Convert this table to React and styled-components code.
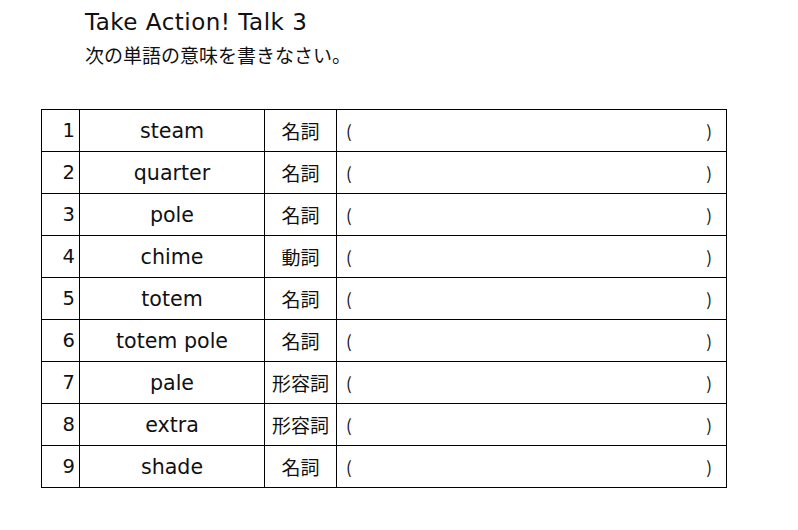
import React from "react";
import styled, { createGlobalStyle } from "styled-components";

const Global = createGlobalStyle`
  html, body { margin: 0; padding: 0; background: #fff; }
  body { font-family: "DejaVu Sans", "Noto Sans CJK JP", sans-serif; color: #111; }
`;

const Page = styled.div`
  width: 798px;
  height: 530px;
  padding: 3px 0 0 41px;
  box-sizing: border-box;
`;

const Header = styled.div`
  padding-left: 44px;
  display: flex;
  flex-direction: column;
`;

const Title = styled.h1`
  margin: 0;
  font-weight: 400;
  font-size: 23px;
  letter-spacing: 0.5px;
  line-height: 38px;
  font-family: "DejaVu Sans", "Noto Sans CJK JP", sans-serif;
`;

const Sub = styled.p`
  margin: 0;
  font-size: 19px;
  line-height: 28px;
  font-family: "Noto Sans CJK JP", sans-serif;
`;

const Table = styled.table`
  margin-top: 40px;
  border-collapse: collapse;
  table-layout: fixed;
  width: 685px;
`;

const Row = styled.tr`
  height: 42px;
`;

const NumCell = styled.td`
  border: 1px solid #000;
  padding: 0 4px 0 0;
  text-align: right;
  font-family: "DejaVu Sans", sans-serif;
  font-size: 19.5px;
  vertical-align: middle;
`;

const WordCell = styled.td`
  border: 1px solid #000;
  padding: 0;
  text-align: center;
  font-family: "DejaVu Sans", sans-serif;
  font-size: 20.6px;
  vertical-align: middle;
`;

const PosCell = styled.td`
  border: 1px solid #000;
  padding: 0;
  text-align: center;
  font-family: "Noto Sans CJK JP", sans-serif;
  font-size: 19px;
  vertical-align: middle;
`;

const AnswerCell = styled.td`
  border: 1px solid #000;
  padding: 0;
  vertical-align: middle;
`;

const Blank = styled.div`
  display: flex;
  justify-content: space-between;
  padding: 0 14px 0 9px;
  font-family: "Noto Sans CJK JP", sans-serif;
  font-size: 17px;
`;

const rows = [
  ["steam", "名詞"],
  ["quarter", "名詞"],
  ["pole", "名詞"],
  ["chime", "動詞"],
  ["totem", "名詞"],
  ["totem pole", "名詞"],
  ["pale", "形容詞"],
  ["extra", "形容詞"],
  ["shade", "名詞"],
];

export default function App() {
  return (
    <Page>
      <Global />
      <Header>
        <Title>Take Action! Talk 3</Title>
        <Sub>次の単語の意味を書きなさい。</Sub>
      </Header>
      <Table>
        <colgroup>
          <col style={{ width: 38 }} />
          <col style={{ width: 185 }} />
          <col style={{ width: 72 }} />
          <col style={{ width: 390 }} />
        </colgroup>
        <tbody>
          {rows.map(([w, pos], i) => (
            <Row key={i}>
              <NumCell>{i + 1}</NumCell>
              <WordCell>{w}</WordCell>
              <PosCell>{pos}</PosCell>
              <AnswerCell>
                <Blank>
                  <span>(</span>
                  <span>)</span>
                </Blank>
              </AnswerCell>
            </Row>
          ))}
        </tbody>
      </Table>
    </Page>
  );
}
